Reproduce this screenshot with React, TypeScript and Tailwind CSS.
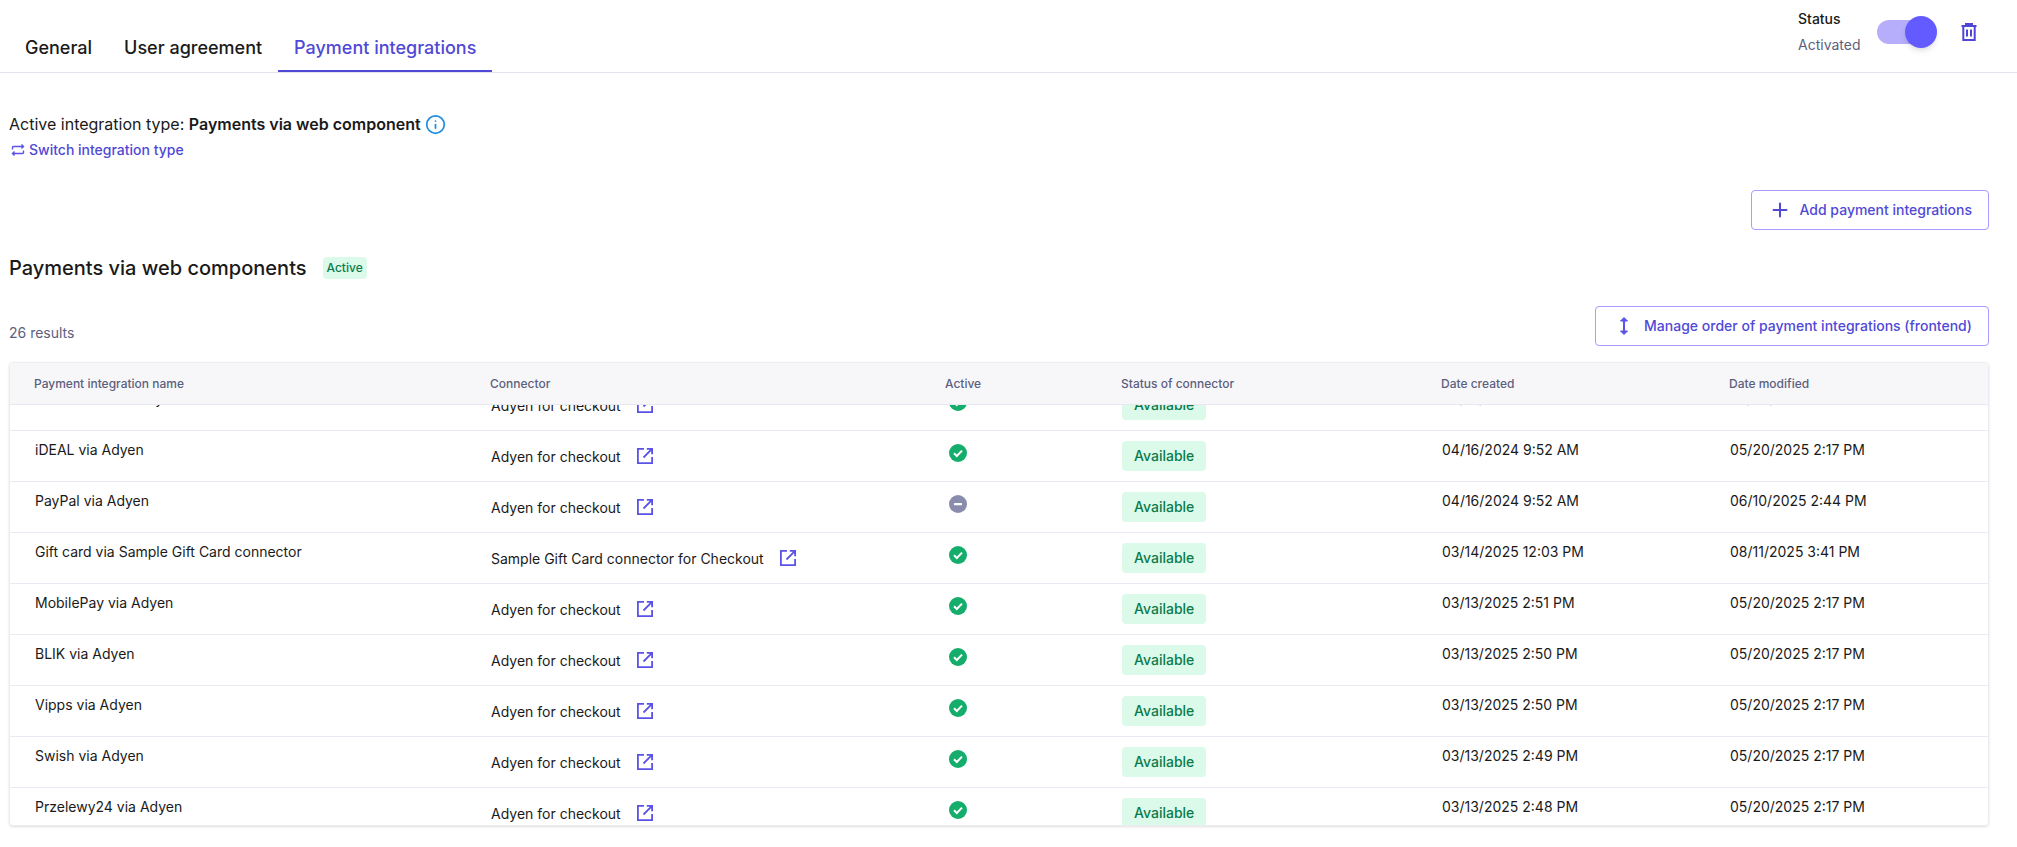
import { Info, Plus } from "lucide-react";

const font = "font-['Inter',sans-serif]";

type Row = {
    name: string;
    connector: string;
    active: boolean;
    created: string;
    modified: string;
};

const rows: Row[] = [
    { name: "Bancontact via Adyen", connector: "Adyen for checkout", active: true, created: "04/16/2024 9:52 AM", modified: "05/20/2025 2:17 PM" },
    { name: "iDEAL via Adyen", connector: "Adyen for checkout", active: true, created: "04/16/2024 9:52 AM", modified: "05/20/2025 2:17 PM" },
    { name: "PayPal via Adyen", connector: "Adyen for checkout", active: false, created: "04/16/2024 9:52 AM", modified: "06/10/2025 2:44 PM" },
    { name: "Gift card via Sample Gift Card connector", connector: "Sample Gift Card connector for Checkout", active: true, created: "03/14/2025 12:03 PM", modified: "08/11/2025 3:41 PM" },
    { name: "MobilePay via Adyen", connector: "Adyen for checkout", active: true, created: "03/13/2025 2:51 PM", modified: "05/20/2025 2:17 PM" },
    { name: "BLIK via Adyen", connector: "Adyen for checkout", active: true, created: "03/13/2025 2:50 PM", modified: "05/20/2025 2:17 PM" },
    { name: "Vipps via Adyen", connector: "Adyen for checkout", active: true, created: "03/13/2025 2:50 PM", modified: "05/20/2025 2:17 PM" },
    { name: "Swish via Adyen", connector: "Adyen for checkout", active: true, created: "03/13/2025 2:49 PM", modified: "05/20/2025 2:17 PM" },
    { name: "Przelewy24 via Adyen", connector: "Adyen for checkout", active: true, created: "03/13/2025 2:48 PM", modified: "05/20/2025 2:17 PM" },
];

const gridCols = "grid grid-cols-[456px_455px_176px_320px_288px_1fr]";

function OpenIcon() {
    return (
        <svg width="18" height="18" viewBox="0 0 18 18" fill="none" stroke="#5b52e8" strokeWidth="1.8" className="shrink-0">
            <path d="M8 1.9H1.9v14.2h14.2V10" />
            <path d="M7.5 10.5 15.8 2.2M10.8 1.9h5.3v5.3" />
        </svg>
    );
}

function SwitchIcon() {
    return (
        <svg width="14" height="14" viewBox="0 0 14 14" fill="none" stroke="#5b52e8" strokeWidth="1.4" className="shrink-0">
            <path d="M1.5 6.5V4.5a1 1 0 0 1 1-1h9.5M10.5 1.5l2 2-2 2" />
            <path d="M12.5 7.5v2a1 1 0 0 1-1 1H2M3.5 8.5l-2 2 2 2" />
        </svg>
    );
}

function TrashIcon() {
    return (
        <svg width="16" height="18" viewBox="0 0 16 18" fill="none" stroke="#4f46d8" strokeWidth="2">
            <path d="M0.5 3h15M5 3V1h6v2M2.3 3v14h11.4V3M6 6.5v7M10 6.5v7" />
        </svg>
    );
}

function SortIcon() {
    return (
        <svg width="12" height="20" viewBox="0 0 12 20" fill="#5b52e8" stroke="#5b52e8" strokeWidth="2" className="shrink-0">
            <path d="M6 3v14" fill="none" />
            <path d="M2.5 5 6 1.5 9.5 5zM2.5 15 6 18.5 9.5 15z" strokeWidth="1" />
        </svg>
    );
}

function ActiveIcon({ active }: { active: boolean }) {
    if (!active) {
        return (
            <svg width="18" height="18" viewBox="0 0 18 18">
                <circle cx="9" cy="9" r="9" fill="#8a8cad" />
                <rect x="5" y="8" width="8" height="2.2" rx="0.5" fill="#fff" />
            </svg>
        );
    }
    return (
        <svg width="18" height="18" viewBox="0 0 18 18">
            <circle cx="9" cy="9" r="9" fill="#14ad6b" />
            <path d="M5 9.3 7.8 12 13 6.6" fill="none" stroke="#fff" strokeWidth="2" />
        </svg>
    );
}

function TableRow({ row }: { row: Row }) {
    return (
        <div className={`${gridCols} h-[51px] border-b border-[#eaeaf2] text-sm text-[#1a1a1a] shrink-0`}>
            <div className="pl-[25px] pt-[9px] leading-5">{row.name}</div>
            <div className="pl-[25px] pt-[16px] flex items-start gap-[15px] leading-5">
                <span>{row.connector}</span>
                <OpenIcon />
            </div>
            <div className="pl-[28px] pt-[13px]">
                <ActiveIcon active={row.active} />
            </div>
            <div className="pl-[25px] pt-[10px]">
                <span className="inline-flex h-[30px] items-center rounded bg-[#dcfaea] px-3 font-medium text-[#0b7a4b]">Available</span>
            </div>
            <div className="pl-[25px] pt-[9px] leading-5">{row.created}</div>
            <div className="pl-[25px] pt-[9px] leading-5">{row.modified}</div>
        </div>
    );
}

export default function App() {
    const headers = ["Payment integration name", "Connector", "Active", "Status of connector", "Date created", "Date modified"];

    return (
        <div className={`${font} w-[2017px] h-[847px] bg-white overflow-hidden text-[#1a1a1a]`}>
            <div className="flex h-[73px] items-start justify-between border-b border-[#e3e3ee] pl-[9px] pr-[40px]">
                <div className="flex h-[72px] items-end text-lg font-medium">
                    <button className="h-[40px] px-4 pb-[8px] text-[#1a1a1a]">General</button>
                    <button className="h-[40px] px-4 pb-[8px] text-[#1a1a1a]">User agreement</button>
                    <button className="h-[40px] border-b-2 border-[#5049d6] px-4 pb-[6px] text-[#5049d6]">Payment integrations</button>
                </div>
                <div className="flex items-start pt-[9px]">
                    <div className="w-[79px] text-sm">
                        <div className="font-medium leading-5">Status</div>
                        <div className="mt-[6px] leading-5 text-[#5c5f7e]">Activated</div>
                    </div>
                    <div className="relative mt-[11px] h-6 w-[54px] rounded-full bg-[#b6aefa]">
                        <div className="absolute right-[-6px] top-[-4px] h-8 w-8 rounded-full bg-[#635bff] shadow-md"></div>
                    </div>
                    <div className="ml-[30px] mt-[14px]">
                        <TrashIcon />
                    </div>
                </div>
            </div>

            <div className="pl-[9px] pr-[28px]">
                <div className="mt-[41px] flex h-5 items-center">
                    <span>Active integration type:&nbsp;</span>
                    <span className="font-semibold">Payments via web component</span>
                    <Info className="ml-[4px] text-[#1f8ee0]" size={21} strokeWidth={2} />
                </div>
                <div className="mt-[6px] flex items-center gap-[4px] pl-[2px] text-sm font-medium text-[#5049d6]">
                    <SwitchIcon />
                    <span>Switch integration type</span>
                </div>

                <div className="mt-[30px] flex justify-end">
                    <button className="flex h-10 w-[238px] items-center justify-end gap-[9px] rounded border border-[#a79cff] pr-4 text-sm font-medium text-[#5049d6]">
                        <Plus size={22} strokeWidth={2.2} />
                        <span>Add payment integrations</span>
                    </button>
                </div>

                <div className="mt-[27px] flex h-[22px] items-center">
                    <h2 className="text-xl font-medium">Payments via web components</h2>
                    <span className="ml-[16px] flex h-[22px] items-center rounded bg-[#dcfaea] px-[4px] text-xs font-medium text-[#0b7a4b]">Active</span>
                </div>

                <div className="mt-[27px] flex items-end justify-between">
                    <span className="pb-[3px] text-sm leading-5 text-[#5c5f7e]">26 results</span>
                    <button className="flex h-10 w-[394px] items-center justify-end gap-[14px] rounded border border-[#a79cff] pr-4 text-sm font-medium text-[#5049d6]">
                        <SortIcon />
                        <span>Manage order of payment integrations (frontend)</span>
                    </button>
                </div>

                <div className="mt-[16px] h-[464px] overflow-hidden rounded border border-[#ececf3] shadow-sm">
                    <div className={`${gridCols} h-[42px] items-center border-b border-[#e8e8f0] bg-[#f7f7fa] text-xs font-medium text-[#5c5f7e]`}>
                        {headers.map((h) => (
                            <div key={h} className="pl-[24px]">{h}</div>
                        ))}
                    </div>
                    <div className="h-[420px] overflow-hidden">
                        <div className="-mt-[25px] flex flex-col">
                            {rows.map((row) => (
                                <TableRow key={row.name} row={row} />
                            ))}
                        </div>
                    </div>
                </div>
            </div>
        </div>
    );
}
